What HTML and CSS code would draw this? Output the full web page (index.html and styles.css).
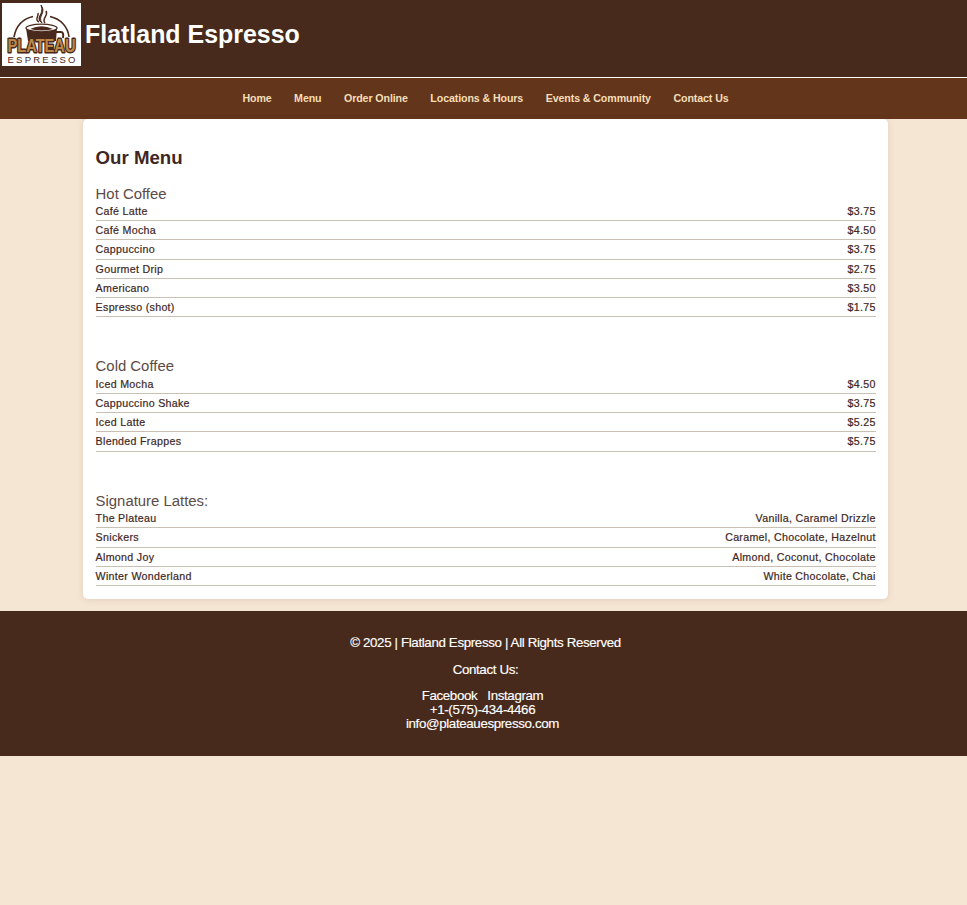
FILE: index.html
```html
<!DOCTYPE html>
<html lang="en">
<head>
<meta charset="utf-8">
<title>Flatland Espresso</title>
<link rel="stylesheet" href="styles.css">
</head>
<body>
<header class="header">
  <svg class="logo" viewBox="0 0 79 63" role="img" aria-label="Plateau Espresso">
    <rect width="79" height="63" fill="#fff"/>
    <g fill="none" stroke="#49291b">
      <path d="M12 34C14 23 20 16 31 13.5M48 13.5C59 16 66 24 67 34" stroke-width="1.6"/>
      <path d="M40 20C32 14 43 12 39 2C45 10 35 13 40 20" fill="#49291b" stroke-width="1"/>
      <path d="M43 20C39 15 47 13 44 8M37 19C32 16 37 14 36 10" stroke-width="1.5"/>
      <path d="M54 29H59Q62 29 61 35" stroke-width="2"/>
    </g>
    <path d="M24 25H55L54 38H26Z" fill="#49291b"/>
    <ellipse cx="39.5" cy="25" rx="15.5" ry="3.8" fill="#fff" stroke="#49291b" stroke-width="1.3"/>
    <path d="M28 26Q39.5 20.5 51 26Q39.5 29 28 26" fill="#49291b"/>
    <text class="logo-name" x="5.5" y="48.5" textLength="68" lengthAdjust="spacingAndGlyphs">PLATEAU</text>
    <text class="logo-sub" x="5.5" y="60" textLength="68">ESPRESSO</text>
  </svg>
  <h1 class="brand">Flatland Espresso</h1>
</header>
<nav class="nav">
  <a>Home</a><a>Menu</a><a>Order Online</a><a>Locations &amp; Hours</a><a>Events &amp; Community</a><a>Contact Us</a>
</nav>
<main class="card">
  <h2 class="title">Our Menu</h2>
  <section class="group">
    <h3>Hot Coffee</h3>
    <ul>
      <li><span>Café Latte</span><span>$3.75</span></li>
      <li><span>Café Mocha</span><span>$4.50</span></li>
      <li><span>Cappuccino</span><span>$3.75</span></li>
      <li><span>Gourmet Drip</span><span>$2.75</span></li>
      <li><span>Americano</span><span>$3.50</span></li>
      <li><span>Espresso (shot)</span><span>$1.75</span></li>
    </ul>
  </section>
  <section class="group">
    <h3>Cold Coffee</h3>
    <ul>
      <li><span>Iced Mocha</span><span>$4.50</span></li>
      <li><span>Cappuccino Shake</span><span>$3.75</span></li>
      <li><span>Iced Latte</span><span>$5.25</span></li>
      <li><span>Blended Frappes</span><span>$5.75</span></li>
    </ul>
  </section>
  <section class="group">
    <h3>Signature Lattes:</h3>
    <ul>
      <li><span>The Plateau</span><span>Vanilla, Caramel Drizzle</span></li>
      <li><span>Snickers</span><span>Caramel, Chocolate, Hazelnut</span></li>
      <li><span>Almond Joy</span><span>Almond, Coconut, Chocolate</span></li>
      <li><span>Winter Wonderland</span><span>White Chocolate, Chai</span></li>
    </ul>
  </section>
</main>
<footer class="footer">
  <p>© 2025 | Flatland Espresso | All Rights Reserved</p>
  <p>Contact Us:</p>
  <div class="contact">
    <div class="social"><a>Facebook</a><a>Instagram</a></div>
    <div>+1-(575)-434-4466</div>
    <div>info@plateauespresso.com</div>
  </div>
</footer>
</body>
</html>
```
FILE: styles.css
```css
* { box-sizing: border-box; }
body {
  margin: 0;
  background: #f5e6d3;
  color: #3e2723;
  font-family: "Liberation Sans", Arial, sans-serif;
}
h1, h2, h3, p, ul { margin: 0; padding: 0; }
.header {
  display: flex;
  align-items: flex-start;
  height: 78px;
  padding: 3px 2px 0;
  gap: 4px;
  background: #472a1b;
  border-bottom: 1px solid #fff;
}
.logo { width: 79px; height: 63px; overflow: visible; }
.logo-name {
  font: bold 19px "Liberation Sans", sans-serif;
  fill: #bd8748;
  stroke: #49291b;
  stroke-width: 3px;
  stroke-linejoin: round;
  paint-order: stroke;
}
.logo-sub { font: 9.5px "Liberation Sans", sans-serif; fill: #49291b; }
.brand { padding-top: 16px; color: #fff; font-size: 24.95px; line-height: 30px; }
.nav {
  display: flex;
  justify-content: center;
  gap: 22.5px;
  height: 41px;
  padding-left: 4px;
  background: #63351b;
  color: #f5deb9;
  font-size: 10.67px;
  font-weight: bold;
  letter-spacing: -0.11px;
  line-height: 40px;
}
.card {
  width: 805px;
  height: 480px;
  margin: 0 0 12px 83px;
  padding: 27px 12.3px 0 12.6px;
  background: #fff;
  border-radius: 5px;
  box-shadow: 0 1px 7px rgba(71, 42, 27, 0.12);
}
.title { margin-bottom: 15.6px; font-size: 18.67px; line-height: 24px; }
.group { margin-bottom: 41.2px; }
.group h3 { height: 16.4px; color: #5d4b47; font-size: 14.9px; font-weight: normal; line-height: 16.6px; }
.group ul { list-style: none; }
.group li {
  display: flex;
  justify-content: space-between;
  height: 19.21px;
  border-bottom: 1px solid #c9bfb2;
  font-size: 10.67px;
  letter-spacing: 0.3px;
  line-height: 18.25px;
  -webkit-text-stroke: 0.2px #3e2723;
}
.footer {
  height: 145px;
  padding: 25px 0 0 4px;
  background: #472a1b;
  color: #fff;
  font-size: 13.33px;
  letter-spacing: -0.36px;
  line-height: 14px;
  text-align: center;
  -webkit-text-stroke: 0.15px #fff;
}
.footer p { margin-bottom: 12.5px; }
.contact { padding-right: 6px; }
.social { display: flex; justify-content: center; gap: 10px; }
```
